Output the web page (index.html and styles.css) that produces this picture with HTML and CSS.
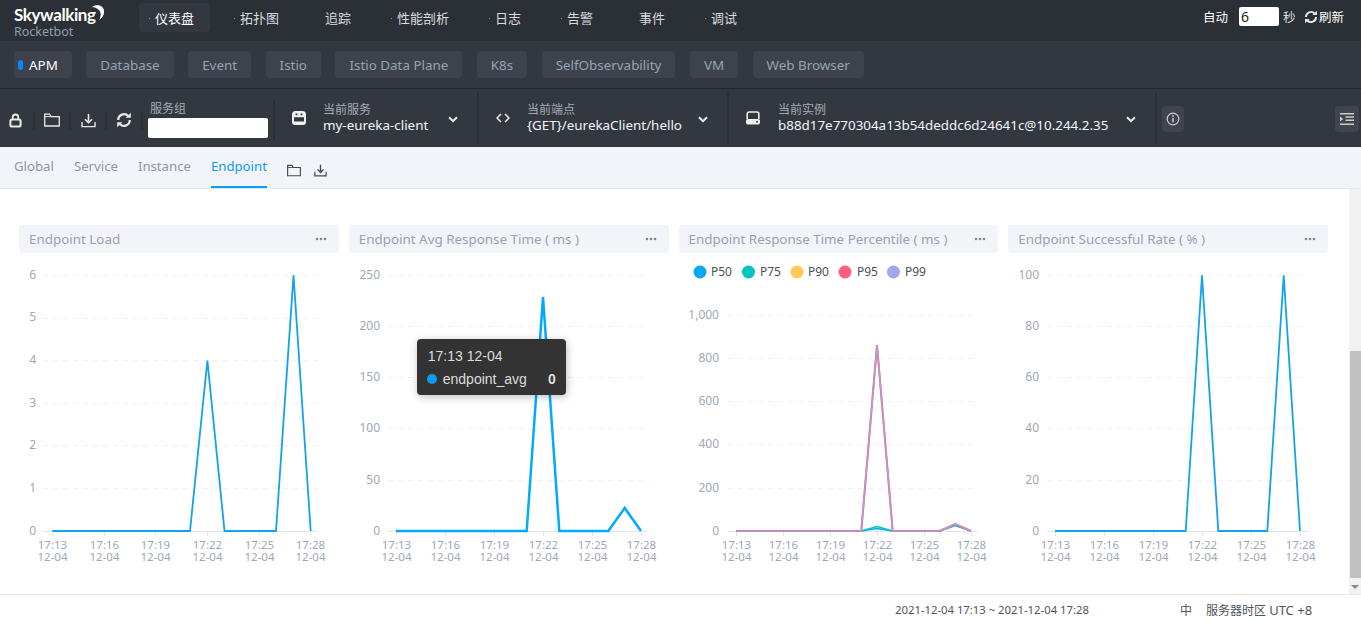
FILE: index.html
```html
<!DOCTYPE html>
<html lang="zh">
<head>
<meta charset="utf-8">
<title>Rocketbot</title>
<link rel="stylesheet" href="styles.css">
</head>
<body>
<svg class="defs" width="0" height="0">
  <symbol id="i-lock" viewBox="0 0 14 16"><path d="M4 7V4.500a3 3 0 0 1 6 0V7" fill="none" stroke="currentColor" stroke-width="2"/><rect x="1.500" y="7" width="11" height="7.500" rx="2" fill="none" stroke="currentColor" stroke-width="2.200"/></symbol>
  <symbol id="i-folder" viewBox="0 0 16 14"><path d="M.7 2.200V13h14.600V3.600H7.200L5.600 1.200H.7z" fill="none" stroke="currentColor" stroke-width="1.300"/><path d="M1 3.600h14" stroke="currentColor" stroke-width="1"/></symbol>
  <symbol id="i-down" viewBox="0 0 15 15"><path d="M7.500 1v8M4 6.200l3.500 3.500L11 6.200" fill="none" stroke="currentColor" stroke-width="1.600"/><path d="M1 9v4.600h13V9" fill="none" stroke="currentColor" stroke-width="1.400"/></symbol>
  <symbol id="i-sync" viewBox="0 0 16 16"><path d="M2.200 8a5.800 5.800 0 0 1 10-4" fill="none" stroke="currentColor" stroke-width="2.200"/><path d="M9.600 5.800h5.200V.8z" fill="currentColor"/><path d="M13.800 8a5.800 5.800 0 0 1-10 4" fill="none" stroke="currentColor" stroke-width="2.200"/><path d="M6.400 10.200H1.200v5z" fill="currentColor"/></symbol>
  <symbol id="i-service" viewBox="0 0 14 14"><path fill-rule="evenodd" fill="currentColor" d="M3.500 0h7A3.500 3.500 0 0 1 14 3.500V11a3 3 0 0 1-3 3H3a3 3 0 0 1-3-3V3.500A3.500 3.500 0 0 1 3.500 0zM2 6.200v4.300h10V6.200zM3.600 2.400v1.800h1.800V2.400zM8.600 2.400v1.800h1.800V2.400z"/></symbol>
  <symbol id="i-instance" viewBox="0 0 14 14"><path fill="none" stroke="currentColor" stroke-width="1.600" d="M1.200 8V3a2 2 0 0 1 2-2h7.600a2 2 0 0 1 2 2v5"/><rect y="8" width="14" height="5.500" rx="2" fill="currentColor"/><circle cx="11" cy="10.700" r="1" fill="#333840"/></symbol>
  <symbol id="i-code" viewBox="0 0 14 10"><path d="M5 1 1 5l4 4M9 1l4 4-4 4" fill="none" stroke="currentColor" stroke-width="1.500"/></symbol>
  <symbol id="i-chev" viewBox="0 0 10 7"><path d="M1 1.200 5 5.200l4-4" fill="none" stroke="currentColor" stroke-width="2"/></symbol>
  <symbol id="i-info" viewBox="0 0 14 14"><circle cx="7" cy="7" r="5.800" fill="none" stroke="currentColor" stroke-width="1.200"/><path d="M7 6v4.200" stroke="currentColor" stroke-width="1.500"/><circle cx="7" cy="4" r=".9" fill="currentColor"/></symbol>
  <symbol id="i-indent" viewBox="0 0 14 14"><path d="M0 1h14v1.500H0zM5.500 4.200H14v1.500H5.500zM5.500 7.400H14v1.500H5.500zM0 11.500h14V13H0z" fill="currentColor"/><path d="M0 4.500 3.200 7 0 9.500z" fill="currentColor"/></symbol>
  <symbol id="i-more" viewBox="0 0 12 4"><circle cx="2" cy="2" r="1.300" fill="currentColor"/><circle cx="6" cy="2" r="1.300" fill="currentColor"/><circle cx="10" cy="2" r="1.300" fill="currentColor"/></symbol>
</svg>

<header class="topbar">
  <div class="logo">
    <span class="logo-name">Skywalking</span>
    <span class="logo-sub">Rocketbot</span>
    <svg class="logo-moon" viewBox="0 0 14 18" width="13" height="17"><path d="M1 3C7-1 15 2 14 9c0 3-2 6-5 8 2-5 2-9-1-11C6 4 4 3 1 3z" fill="#fff"/></svg>
  </div>
  <nav class="nav">
    <a class="nav-item active dot">仪表盘</a>
    <a class="nav-item dot">拓扑图</a>
    <a class="nav-item">追踪</a>
    <a class="nav-item dot">性能剖析</a>
    <a class="nav-item dot">日志</a>
    <a class="nav-item dot">告警</a>
    <a class="nav-item">事件</a>
    <a class="nav-item dot">调试</a>
  </nav>
  <div class="auto">
    <span class="auto-label">自动</span>
    <span class="auto-input">6</span>
    <span class="auto-unit">秒</span>
    <svg class="auto-icon"><use href="#i-sync"/></svg>
    <span class="auto-refresh">刷新</span>
  </div>
</header>

<div class="layers">
  <a class="layer active"><i class="layer-mark"></i>APM</a>
  <a class="layer">Database</a>
  <a class="layer">Event</a>
  <a class="layer">Istio</a>
  <a class="layer">Istio Data Plane</a>
  <a class="layer">K8s</a>
  <a class="layer">SelfObservability</a>
  <a class="layer">VM</a>
  <a class="layer">Web Browser</a>
</div>

<div class="context">
  <div class="tools">
    <span class="tool tool-first"><svg class="ic-lock"><use href="#i-lock"/></svg></span>
    <span class="tool"><svg class="ic-folder"><use href="#i-folder"/></svg></span>
    <span class="tool"><svg class="ic-down"><use href="#i-down"/></svg></span>
    <span class="tool"><svg class="ic-sync"><use href="#i-sync"/></svg></span>
  </div>
  <div class="group">
    <span class="sel-label">服务组</span>
    <span class="group-input"></span>
  </div>
  <div class="sel sel-service">
    <svg class="sel-icon"><use href="#i-service"/></svg>
    <div class="sel-text"><span class="sel-label">当前服务</span><span class="sel-value">my-eureka-client</span></div>
    <svg class="chev"><use href="#i-chev"/></svg>
  </div>
  <div class="sel sel-endpoint">
    <svg class="sel-icon code"><use href="#i-code"/></svg>
    <div class="sel-text"><span class="sel-label">当前端点</span><span class="sel-value">{GET}/eurekaClient/hello</span></div>
    <svg class="chev"><use href="#i-chev"/></svg>
  </div>
  <div class="sel sel-instance">
    <svg class="sel-icon"><use href="#i-instance"/></svg>
    <div class="sel-text"><span class="sel-label">当前实例</span><span class="sel-value">b88d17e770304a13b54deddc6d24641c@10.244.2.35</span></div>
    <svg class="chev"><use href="#i-chev"/></svg>
  </div>
  <span class="square info"><svg class="ic-info"><use href="#i-info"/></svg></span>
  <span class="square indent"><svg class="ic-indent"><use href="#i-indent"/></svg></span>
</div>

<div class="tabs">
  <a class="tab">Global</a>
  <a class="tab">Service</a>
  <a class="tab">Instance</a>
  <a class="tab active">Endpoint</a>
  <svg class="tab-folder"><use href="#i-folder"/></svg>
  <svg class="tab-down"><use href="#i-down"/></svg>
</div>

<div class="body">
  <main class="cards">
    <section class="card">
      <div class="card-head"><span>Endpoint Load</span><svg class="more"><use href="#i-more"/></svg></div>
      <svg class="chart" viewBox="19 253 320 312" width="320" height="312">
        <g class="grid"><path d="M43 275.500H318M43 318.500H318M43 360.500H318M43 403.500H318M43 445.500H318M43 488.500H318"/></g>
        <path class="axis" d="M43 531.500H318M52.500 531v5M104.500 531v5M155.500 531v5M207.500 531v5M259.500 531v5M310.500 531v5"/>
        <g class="ylab"><text x="36" y="279">6</text><text x="36" y="321">5</text><text x="36" y="364">4</text><text x="36" y="407">3</text><text x="36" y="449">2</text><text x="36" y="492">1</text><text x="36" y="535">0</text></g>
        <g class="xlab"><text x="52.500" y="548.500">17:13</text><text x="52.500" y="560.500">12-04</text><text x="104.500" y="548.500">17:16</text><text x="104.500" y="560.500">12-04</text><text x="155.500" y="548.500">17:19</text><text x="155.500" y="560.500">12-04</text><text x="207.500" y="548.500">17:22</text><text x="207.500" y="560.500">12-04</text><text x="259.500" y="548.500">17:25</text><text x="259.500" y="560.500">12-04</text><text x="310.500" y="548.500">17:28</text><text x="310.500" y="560.500">12-04</text></g>
        <polyline class="line thin" points="52.300,531 190,531 207.400,360.500 224.500,531 276,531 293.500,275.300 310.700,531"/>
      </svg>
    </section>

    <section class="card">
      <div class="card-head"><span>Endpoint Avg Response Time ( ms )</span><svg class="more"><use href="#i-more"/></svg></div>
      <svg class="chart" viewBox="349 253 320 312" width="320" height="312">
        <g class="grid"><path d="M388 275.500H649M388 326.500H649M388 377.500H649M388 428.500H649M388 480.500H649"/></g>
        <path class="axis" d="M388 531.500H649M396.500 531v5M445.500 531v5M494.500 531v5M543.500 531v5M592.500 531v5M641.500 531v5"/>
        <g class="ylab"><text x="380" y="279">250</text><text x="380" y="330">200</text><text x="380" y="381">150</text><text x="380" y="432">100</text><text x="380" y="484">50</text><text x="380" y="535">0</text></g>
        <g class="xlab"><text x="396.500" y="548.500">17:13</text><text x="396.500" y="560.500">12-04</text><text x="445.500" y="548.500">17:16</text><text x="445.500" y="560.500">12-04</text><text x="494.500" y="548.500">17:19</text><text x="494.500" y="560.500">12-04</text><text x="543.500" y="548.500">17:22</text><text x="543.500" y="560.500">12-04</text><text x="592.500" y="548.500">17:25</text><text x="592.500" y="560.500">12-04</text><text x="641.500" y="548.500">17:28</text><text x="641.500" y="560.500">12-04</text></g>
        <polyline class="line thick" points="396,531 526.700,531 543,297 559.300,531 608.300,531 624.700,508 641,531"/>
      </svg>
      <div class="tooltip">
        <div class="tooltip-title">17:13 12-04</div>
        <div class="tooltip-row"><i class="tooltip-dot"></i><span>endpoint_avg</span><b>0</b></div>
      </div>
    </section>

    <section class="card">
      <div class="card-head"><span>Endpoint Response Time Percentile ( ms )</span><svg class="more"><use href="#i-more"/></svg></div>
      <svg class="chart" viewBox="679 253 320 312" width="320" height="312">
        <g class="legend">
          <circle cx="700" cy="272" r="6.500" fill="#00a8f5"/><text x="711" y="276">P50</text>
          <circle cx="748.500" cy="272" r="6.500" fill="#00c4be"/><text x="760" y="276">P75</text>
          <circle cx="797" cy="272" r="6.500" fill="#ffc857"/><text x="808" y="276">P90</text>
          <circle cx="845" cy="272" r="6.500" fill="#ff5f7e"/><text x="857" y="276">P95</text>
          <circle cx="893.500" cy="272" r="6.500" fill="#9fa8e8"/><text x="905" y="276">P99</text>
        </g>
        <g class="grid"><path d="M728 315.500H978M728 358.500H978M728 401.500H978M728 444.500H978M728 488.500H978"/></g>
        <path class="axis" d="M728 531.500H978M736.500 531v5M783.500 531v5M830.500 531v5M877.500 531v5M924.500 531v5M971.500 531v5"/>
        <g class="ylab"><text x="719" y="319">1,000</text><text x="719" y="362">800</text><text x="719" y="405">600</text><text x="719" y="448">400</text><text x="719" y="492">200</text><text x="719" y="535">0</text></g>
        <g class="xlab"><text x="736.500" y="548.500">17:13</text><text x="736.500" y="560.500">12-04</text><text x="783.500" y="548.500">17:16</text><text x="783.500" y="560.500">12-04</text><text x="830.500" y="548.500">17:19</text><text x="830.500" y="560.500">12-04</text><text x="877.500" y="548.500">17:22</text><text x="877.500" y="560.500">12-04</text><text x="924.500" y="548.500">17:25</text><text x="924.500" y="560.500">12-04</text><text x="971.500" y="548.500">17:28</text><text x="971.500" y="560.500">12-04</text></g>
        <polyline class="pline" stroke="#00a8f5" points="736,531 861.300,531 877,528.500 892.700,531 939.700,531 955.300,525.500 971,531"/>
        <polyline class="pline" stroke="#00c4be" points="736,531 861.300,531 877,526.500 892.700,531 939.700,531 955.300,525 971,531"/>
        <polyline class="pline" stroke="#ffc857" points="736,531 861.300,531 877,345 892.700,531 939.700,531 955.300,524 971,531"/>
        <polyline class="pline pink" stroke="#ff5f7e" points="736,531 861.300,531 877,345 892.700,531 939.700,531 955.300,524 971,531"/>
        <polyline class="pline top" stroke="#9fa8e8" points="736,531 861.300,531 877,345 892.700,531 939.700,531 955.300,524 971,531"/>
      </svg>
    </section>

    <section class="card">
      <div class="card-head"><span>Endpoint Successful Rate ( % )</span><svg class="more"><use href="#i-more"/></svg></div>
      <svg class="chart" viewBox="1008 253 320 312" width="320" height="312">
        <g class="grid"><path d="M1047 275.500H1308M1047 326.500H1308M1047 377.500H1308M1047 428.500H1308M1047 480.500H1308"/></g>
        <path class="axis" d="M1047 531.500H1308M1055.500 531v5M1104.500 531v5M1153.500 531v5M1202.500 531v5M1251.500 531v5M1300.500 531v5"/>
        <g class="ylab"><text x="1039" y="279">100</text><text x="1039" y="330">80</text><text x="1039" y="381">60</text><text x="1039" y="432">40</text><text x="1039" y="484">20</text><text x="1039" y="535">0</text></g>
        <g class="xlab"><text x="1055.500" y="548.500">17:13</text><text x="1055.500" y="560.500">12-04</text><text x="1104.500" y="548.500">17:16</text><text x="1104.500" y="560.500">12-04</text><text x="1153.500" y="548.500">17:19</text><text x="1153.500" y="560.500">12-04</text><text x="1202.500" y="548.500">17:22</text><text x="1202.500" y="560.500">12-04</text><text x="1251.500" y="548.500">17:25</text><text x="1251.500" y="560.500">12-04</text><text x="1300.500" y="548.500">17:28</text><text x="1300.500" y="560.500">12-04</text></g>
        <polyline class="line thin" points="1055,531 1185.700,531 1202,275.300 1218.300,531 1267.300,531 1283.700,275.300 1300,531"/>
      </svg>
    </section>
  </main>
  <div class="rail"><div class="rail-thumb"></div><i class="rail-arrow"></i></div>
</div>

<footer class="footer">
  <span class="footer-time">2021-12-04 17:13 ~ 2021-12-04 17:28</span>
  <span class="footer-lang">中</span>
  <span class="footer-zone">服务器时区 <span class="footer-utc">UTC +8</span></span>
</footer>
</body>
</html>
```
FILE: styles.css
```css
* { box-sizing: border-box; }
html, body { margin: 0; height: 100%; overflow: hidden; }
body {
  display: flex;
  flex-direction: column;
  width: 1361px;
  height: 621px;
  font-family: "Noto Sans", "Noto Sans CJK SC", sans-serif;
  font-size: 13.4px;
  background: #fff;
}
.defs { position: absolute; }
svg { display: block; }

.topbar {
  display: flex;
  align-items: flex-start;
  height: 41px;
  flex: none;
  background: #2b3036;
  color: #fff;
}
.logo { position: relative; width: 139px; height: 41px; flex: none; padding: 4px 0 0 14px; }
.logo-name { display: block; font-family: "Lato", sans-serif; font-size: 17px; letter-spacing: -.4px; line-height: 21px; font-weight: 700; }
.logo-sub { display: block; font-size: 12.500px; line-height: 14px; color: #8f9db0; }
.logo-moon { position: absolute; left: 91px; top: 4px; }
.nav { display: flex; gap: 14px; padding-top: 3px; }
.nav-item {
  position: relative;
  height: 29px;
  padding: 0 16px;
  border-radius: 4px;
  font-size: 13px;
  line-height: 30px;
  color: #d9dbde;
}
.nav-item.active { background: #333840; color: #fff; }
.nav-item.dot::before {
  content: "";
  position: absolute;
  left: 10px;
  top: 15px;
  width: 1px;
  height: 1px;
  background: #8a8f96;
}
.auto { display: flex; align-items: center; margin-left: auto; height: 33px; padding-right: 17px; font-size: 12.500px; }
.auto-label { width: 36px; }
.auto-input {
  width: 40px;
  height: 19px;
  background: #fff;
  border-radius: 2px;
  color: #222;
  font-size: 14px;
  line-height: 19px;
  padding-left: 2px;
}
.auto-unit { margin-left: 4px; width: 21px; color: #d9dbde; }
.auto-icon { width: 14px; height: 14px; color: #e8e8e8; margin-right: 1px; }

.layers {
  display: flex;
  gap: 14.500px;
  align-items: flex-start;
  flex: none;
  height: 48px;
  padding: 10px 0 0 14px;
  background: #333840;
  border-bottom: 1px solid #23272c;
}
.layer {
  height: 27px;
  padding: 0 14px;
  border-radius: 4px;
  background: #3d424c;
  color: #98a3b2;
  line-height: 28px;
  white-space: nowrap;
}
.layer.active { display: flex; align-items: center; padding: 0 14px 0 4px; color: #fff; }
.layer-mark { width: 5px; height: 10px; border-radius: 2.500px; background: #0a84ff; margin-right: 6px; }

.context {
  display: flex;
  align-items: center;
  flex: none;
  height: 58px;
  background: #333840;
  color: #e8e8e8;
}
.tools { display: flex; width: 148px; flex: none; padding-top: 4px; }
.tool {
  display: flex;
  align-items: center;
  justify-content: center;
  width: 36px;
  height: 19px;
  border-right: 2px solid #2b3036;
}
.tool-first { width: 35px; padding-right: 2px; }
.ic-lock { width: 13px; height: 15px; }
.ic-folder { width: 16px; height: 14px; }
.ic-down { width: 15px; height: 15px; }
.ic-sync { width: 16px; height: 16px; }
.group {
  display: flex;
  flex-direction: column;
  width: 127px;
  height: 38px;
  flex: none;
  margin-top: 3px;
  padding-left: 2px;
  border-right: 2px solid #2b3036;
}
.group .sel-label { line-height: 15px; }
.group-input { display: block; width: 120px; height: 20px; margin: 2px 0 0 -2px; background: #fff; border-radius: 2px; }
.sel {
  display: flex;
  align-items: center;
  height: 52px;
  flex: none;
  padding-left: 17px;
  border-right: 2px solid #2b3036;
}
.sel-service { width: 204px; }
.sel-endpoint { width: 250px; }
.sel-instance { width: 428px; }
.sel-icon { width: 14px; height: 14px; flex: none; margin-right: 17px; color: #f0f0f0; }
.sel-icon.code { height: 10px; }
.sel-instance .sel-icon { margin-right: 18px; }
.sel-text { display: flex; flex-direction: column; margin-top: -2px; }
.sel-label { font-size: 12px; line-height: 16px; color: #a4abb6; }
.sel-value { font-size: 13.400px; line-height: 15px; color: #f4f5f6; white-space: nowrap; }
.chev { width: 10px; height: 7px; margin: 2px 19px 0 auto; color: #eee; flex: none; }
.square {
  display: flex;
  align-items: center;
  justify-content: center;
  width: 22px;
  height: 26px;
  border-radius: 4px;
  background: #3f444e;
  color: #ccc;
  margin-top: 2px;
}
.info { margin-left: 5px; }
.indent { margin-left: auto; margin-right: 2px; width: 24px; }
.ic-info { width: 14px; height: 14px; }
.ic-indent { width: 14px; height: 14px; }

.tabs {
  display: flex;
  align-items: flex-start;
  flex: none;
  height: 42px;
  padding-left: 14px;
  gap: 20px;
  background: #f2f4f9;
  border-bottom: 1px solid #e4e6ea;
}
.tab { height: 41px; padding-top: 10px; font-size: 13.200px; line-height: 19px; color: #8f97a3; }
.tab.active { color: #0d9bf2; border-bottom: 2px solid #0d9bf2; }
.tab-folder { width: 14px; height: 13px; margin-top: 17px; color: #444b55; }
.tab-down { width: 13px; height: 13px; margin: 17px 0 0 -7px; color: #444b55; }

.body { display: flex; flex: 1; min-height: 0; }
.cards {
  display: grid;
  grid-template-columns: repeat(4, 1fr);
  column-gap: 10px;
  align-content: start;
  flex: 1;
  padding: 36px 21px 0 19px;
}
.card { position: relative; min-width: 0; }
.card-head {
  display: flex;
  align-items: center;
  justify-content: space-between;
  height: 28px;
  padding: 0 12px 1px 10px;
  border-radius: 3px;
  background: #f2f4f9;
  color: #9aa2af;
  white-space: nowrap;
}
.more { width: 12px; height: 4px; color: #7d8591; }
.chart { display: block; overflow: visible; font-family: "Noto Sans", sans-serif; }
.grid path { stroke: #eff0f2; stroke-width: 1; stroke-dasharray: 5 5; fill: none; }
.axis { stroke: #e3e5e8; stroke-width: 1; fill: none; }
.ylab text { font-size: 12px; fill: #a0a7b4; text-anchor: end; }
.xlab text { font-size: 11.500px; fill: #a0a7b4; text-anchor: middle; }
.legend text { font-size: 12px; fill: #4a5058; }
.line { fill: none; stroke-linejoin: miter; }
.line.thin { stroke: #12a3ea; stroke-width: 1.800; }
.line.thick { stroke: #00aaff; stroke-width: 2.500; }
.pline { fill: none; stroke-width: 1.500; }
.pline.pink { stroke-width: 2; }
.pline.top { opacity: .85; }

.tooltip {
  position: absolute;
  left: 68px;
  top: 114px;
  width: 149px;
  height: 56px;
  padding: 6px 10px 0 11px;
  border-radius: 4px;
  background: #333;
  box-shadow: 1px 2px 8px rgba(0, 0, 0, .25);
  color: #ddd;
  font-family: "Liberation Sans", sans-serif;
  font-size: 14px;
}
.tooltip-title { line-height: 22px; }
.tooltip-row { display: flex; align-items: center; line-height: 24px; }
.tooltip-dot { width: 10px; height: 10px; border-radius: 50%; background: #0a9bf0; margin-right: 6px; margin-left: -1px; }
.tooltip-row b { margin-left: auto; }

.rail {
  position: relative;
  width: 12px;
  flex: none;
  background: #f1f1f1;
  padding-top: 162px;
}
.rail-thumb { height: 227px; background: #c1c1c1; margin-left: 1px; }
.rail-arrow {
  position: absolute;
  left: 2px;
  bottom: 5px;
  border-left: 4px solid transparent;
  border-right: 4px solid transparent;
  border-top: 4px solid #8a8a8a;
}

.footer {
  display: flex;
  align-items: center;
  flex: none;
  height: 27px;
  padding: 3px 0 0 895px;
  border-top: 1px solid #e6e8eb;
  background: #fff;
  color: #4c5561;
  font-size: 12px;
}
.footer-time { width: 285px; font-size: 11.300px; white-space: nowrap; }
.footer-lang { width: 26px; }
.footer-zone { white-space: nowrap; }
.footer-utc { font-size: 13px; }
```
